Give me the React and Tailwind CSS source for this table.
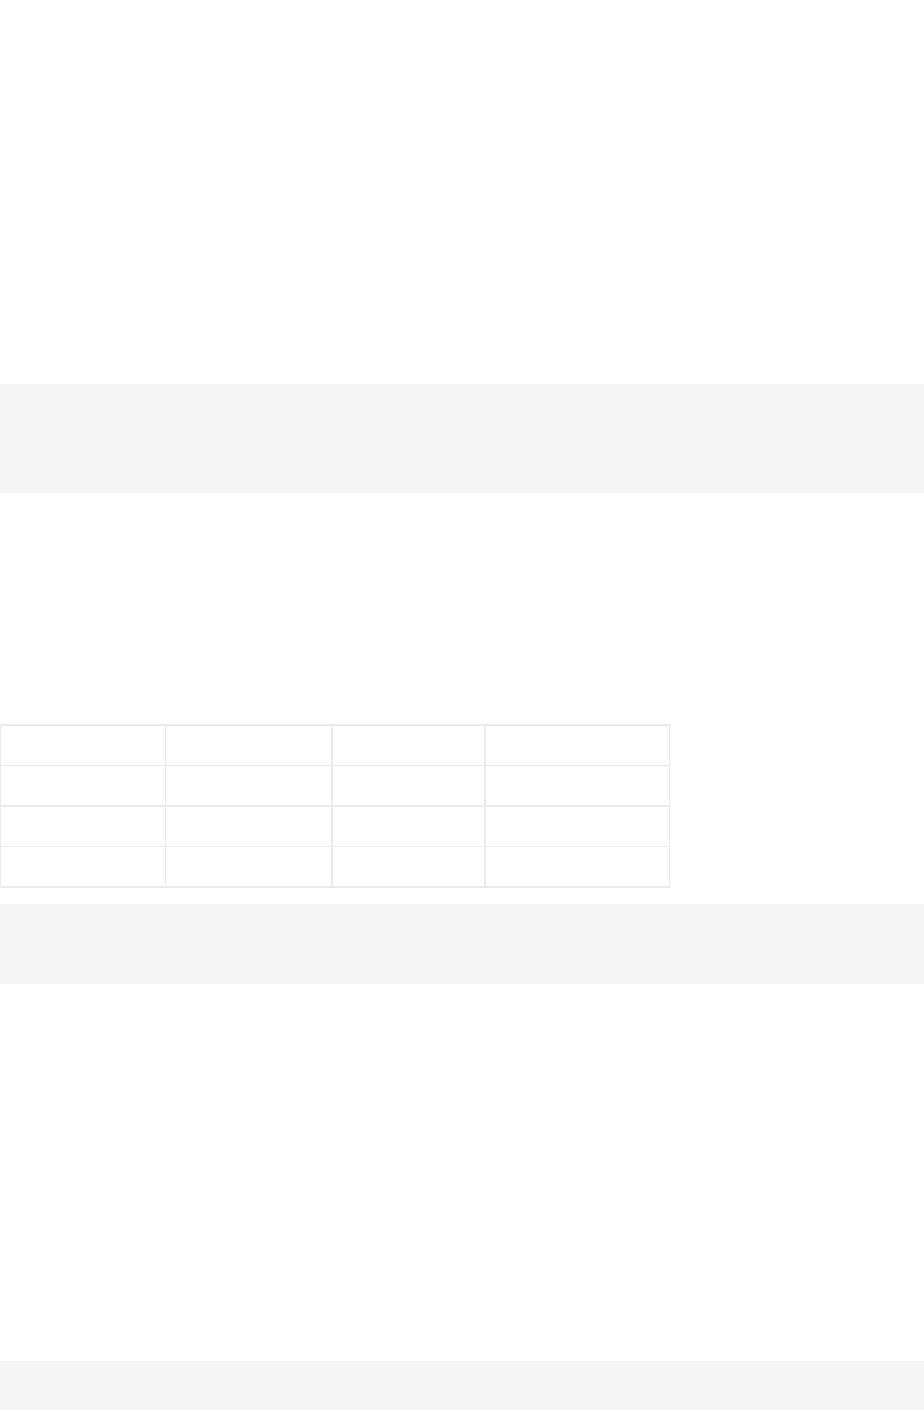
export default function App() {
  const rows = [
    "h-[40px] border-b",
    "h-[41px] border-b-2",
    "h-[40px] border-b",
    "h-[41px] border-b-2",
  ];
  return (
    <div className="min-h-[1410px] bg-white font-['Liberation_Sans',sans-serif]">
      <div className="h-[384px]" />
      <div className="h-[109px] bg-[#f5f5f5]" />
      <div className="h-[231px]" />
      <div className="w-[670px] border-t-2 border-l border-r border-[#ebebeb]">
        {rows.map((r, i) => (
          <div key={i} className={`flex border-[#ebebeb] ${r}`}>
            <div className="w-[165px] border-r border-[#ebebeb]" />
            <div className="w-[167px] border-r-2 border-[#ebebeb]" />
            <div className="w-[153px] border-r-2 border-[#ebebeb]" />
            <div className="flex-1" />
          </div>
        ))}
      </div>
      <div className="h-[16px]" />
      <div className="h-[80px] bg-[#f5f5f5]" />
      <div className="h-[377px]" />
      <div className="h-[49px] bg-[#f5f5f5]" />
    </div>
  );
}
